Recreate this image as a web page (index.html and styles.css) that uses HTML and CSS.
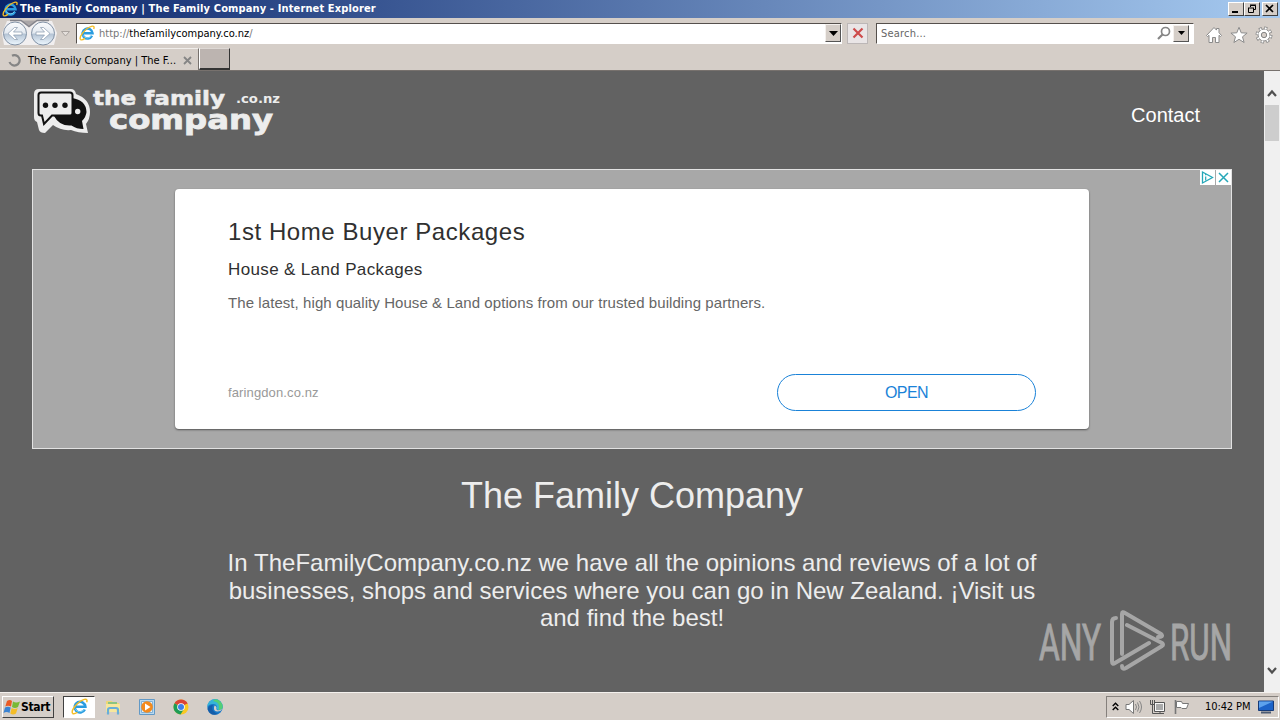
FILE: index.html
```html
<!DOCTYPE html>
<html lang="en">
<head>
    <meta charset="UTF-8">
    <title>The Family Company | The Family Company</title>
    <link rel="stylesheet" href="styles.css">
</head>
<body>
    <!-- shared icons -->
    <svg class="defs" width="0" height="0">
        <symbol id="ie" viewBox="0 0 16 16">
            <path d="M13 10.800a5 5 0 1 1 .5-2.600H4.500" fill="none" stroke="#2a9ce0" stroke-width="2.500"/>
            <path d="M12.600 10.400a4.800 4.800 0 0 1-8.600-.2" fill="none" stroke="#8cdcf8" stroke-width=".8"/>
            <path d="M1.600 14.600C-.6 12 6.500 3 12.500 1.300c2.500-.7 3 .8 2.200 2.700M1.600 14.600c1.200.8 3-.2 4.400-1.200" fill="none" stroke="#f4bd26" stroke-width="1.400"/>
        </symbol>
    </svg>

    <div class="titlebar">
        <svg class="title-icon" width="16" height="16"><use href="#ie"/></svg>
        <span class="title-text">The Family Company | The Family Company - Internet Explorer</span>
        <div class="win-buttons">
            <span class="win-btn"><svg width="14" height="12"><path d="M3 9h6" stroke="#000" stroke-width="2"/></svg></span>
            <span class="win-btn"><svg width="14" height="12"><path d="M5.500 4V2.500h5v4H9M5 2h6M3 5h6M3.500 5v4.500h5V5" fill="none" stroke="#000"/></svg></span>
            <span class="win-btn close"><svg width="14" height="12"><path d="M3 2l7 7M10 2l-7 7" stroke="#000" stroke-width="1.700"/></svg></span>
        </div>
    </div>

    <div class="navbar">
        <svg class="nav-arrows" width="76" height="30">
            <defs>
                <linearGradient id="btn" x1="0" y1="0" x2="0" y2="1">
                    <stop offset="0" stop-color="#fbfcfe"/>
                    <stop offset=".48" stop-color="#e3e9f0"/>
                    <stop offset=".52" stop-color="#b4c3d4"/>
                    <stop offset="1" stop-color="#eef8ff"/>
                </linearGradient>
            </defs>
            <path d="M7 3h45l5 12-3 12H4L2 15z" fill="#f1eff0"/>
            <path d="M10 2.500h11l8 6 8-6h12" fill="#aaa6a8" stroke="#85858c" stroke-width="1.500"/>
            <circle cx="15" cy="15.500" r="11.500" fill="url(#btn)" stroke="#8292a6"/>
            <circle cx="43" cy="15.500" r="11.500" fill="url(#btn)" stroke="#8292a6"/>
            <path d="M8 15.500l6.500-6h3l-4 4.500H22v3h-8.500l4 4.500h-3z" fill="#fff" stroke="#8798ae" stroke-width=".7"/>
            <path d="M50 15.500l-6.500-6h-3l4 4.500H36v3h8.500l-4 4.500h3z" fill="#fff" stroke="#8798ae" stroke-width=".7"/>
            <path d="M61.500 13.500h8l-4 4.500z" fill="#e4dfdb" stroke="#aaa4a0"/>
        </svg>
        <div class="address">
            <svg width="16" height="16"><use href="#ie"/></svg>
            <span class="url"><i>http://</i>thefamilycompany.co.nz<i>/</i></span>
            <span class="drop"><svg width="9" height="5"><path d="M0 0h9L4.500 5z"/></svg></span>
        </div>
        <div class="stop"><svg width="12" height="12"><path d="M1.500 1.500l9 9M10.500 1.500l-9 9" stroke="#cd4b4b" stroke-width="2.200"/></svg></div>
        <div class="search">
            <span>Search...</span>
            <svg width="14" height="14"><circle cx="8.500" cy="5.500" r="4" fill="#fff" stroke="#858585" stroke-width="1.700"/><path d="M5.500 8.500L1 13" stroke="#858585" stroke-width="2.200"/></svg>
            <span class="drop"><svg width="7" height="4"><path d="M0 0h7L3.500 4z"/></svg></span>
        </div>
        <div class="tools">
            <svg width="18" height="18"><path d="M1.500 9.500L9 1.500l2.500 2.600V2.500H14v4.200l2.500 2.800-1 1-1.500-1.200v7.200h-3.500v-5h-3v5H4V9.300l-1.500 1.200z" fill="#fff" stroke="#8b8b8b"/></svg>
            <svg width="18" height="18"><path d="M9 1.300l2.200 5.500 5.900.3-4.600 3.700 1.600 5.700L9 13.300l-5.100 3.200 1.600-5.700L.9 7.100l5.900-.3z" fill="#fff" stroke="#8b8b8b"/></svg>
            <svg width="18" height="18"><circle cx="9" cy="9" r="6.700" fill="none" stroke="#858585" stroke-width="3.500" stroke-dasharray="3 2.262"/><circle cx="9" cy="9" r="6" fill="#fff" stroke="#858585"/><circle cx="9" cy="9" r="6.700" fill="none" stroke="#fff" stroke-width="2" stroke-dasharray="1.800 3.462" stroke-dashoffset="-.6"/><circle cx="9" cy="9" r="2.700" fill="#d5cec8" stroke="#858585"/></svg>
        </div>
    </div>

    <div class="tabs">
        <div class="tab">
            <svg width="13" height="13"><path d="M4 1.700A5.200 5.200 0 1 1 1.500 8" fill="none" stroke="#858585" stroke-width="2.200"/></svg>
            <span>The Family Company | The F...</span>
            <svg class="tab-x" width="9" height="9"><path d="M1 1l7 7M8 1L1 8" stroke="#858585" stroke-width="1.800"/></svg>
        </div>
        <div class="new-tab"></div>
    </div>

    <div class="viewport">
        <main class="page">
            <header>
                <svg class="logo" width="250" height="52" fill="#ededed">
                    <path d="M6 1h32q4 0 5 5q14 5 14 18q0 7-4 12l2 9q-10 0-17-3q-10 1-18-5l-8 8q-5 0-6-3l-2-8q-3-1-3-5V6q0-5 5-5z"/>
                    <path d="M39 10q14 2 14.500 14q-.5 5-4.500 9l1.500 8q-7 0-12-3.500q-12 1-17.500-9.500h15q3 0 3-3z" fill="#111"/>
                    <path d="M8 4.500h29q2.500 0 2.500 2.500v18q0 2.500-2.500 2.500H19l-8 8.500-2-8.500H8q-2.500 0-2.500-2.500V7q0-2.500 2.500-2.500z" stroke="#111" stroke-width="2"/>
                    <circle cx="12.500" cy="17.300" r="2.700" fill="#111"/>
                    <circle cx="22" cy="17.300" r="2.700" fill="#111"/>
                    <circle cx="32" cy="17.300" r="2.700" fill="#111"/>
                    <circle cx="44.700" cy="23.500" r="2.700"/>
                    <text class="logo-text medium" x="60" y="17" font-size="19" textLength="132" lengthAdjust="spacingAndGlyphs">the family</text>
                    <text class="logo-text" x="203" y="15" font-size="13" textLength="44" lengthAdjust="spacingAndGlyphs">.co.nz</text>
                    <text class="logo-text heavy" x="76" y="41" font-size="27" textLength="164" lengthAdjust="spacingAndGlyphs">company</text>
                </svg>
                <a class="contact">Contact</a>
            </header>

            <div class="ad">
                <div class="ad-choices">
                    <span><svg width="15" height="15"><path d="M2.500 2v11L12.500 7.500z" fill="none" stroke="#25a7b8" stroke-width="1.300"/><path d="M5.700 6.500v4M5.700 4v1.300" stroke="#25a7b8" stroke-width="1.200"/></svg></span>
                    <span><svg width="15" height="15"><path d="M3 3l9 9M12 3l-9 9" stroke="#25a7b8" stroke-width="1.500"/></svg></span>
                </div>
                <div class="ad-card">
                    <div class="ad-title">1st Home Buyer Packages</div>
                    <div class="ad-subtitle">House &amp; Land Packages</div>
                    <div class="ad-text">The latest, high quality House &amp; Land options from our trusted building partners.</div>
                    <div class="ad-footer">
                        <span class="ad-domain">faringdon.co.nz</span>
                        <a class="ad-open">OPEN</a>
                    </div>
                </div>
            </div>

            <h1>The Family Company</h1>
            <p class="intro"><span>In TheFamilyCompany.co.nz we have all the opinions and reviews of a lot of</span><br>businesses, shops and services where you can go in New Zealand. ¡Visit us<br>and find the best!</p>

            <svg class="watermark" width="204" height="66">
                <text x="4" y="50" textLength="62" lengthAdjust="spacingAndGlyphs">ANY</text>
                <path d="M81 8q-4 0-4 4v39q0 4 3 2l34-20M87 44V4q0-3 3-1l36 21q3 3-3 3M92 15l35 18q2 2 0 3L91 58q-4 2-4-2"/>
                <text x="135" y="50" textLength="62" lengthAdjust="spacingAndGlyphs">RUN</text>
            </svg>
        </main>
        <div class="scrollbar">
            <svg width="10" height="8"><path d="M1 7l4-4.500L9 7" fill="none" stroke="#505050" stroke-width="2.200"/></svg>
            <div class="thumb"></div>
            <svg class="down" width="10" height="8"><path d="M1 1l4 4.500L9 1" fill="none" stroke="#505050" stroke-width="2.200"/></svg>
        </div>
    </div>

    <div class="taskbar">
        <div class="start">
            <svg width="18" height="16"><path d="M4 2q3-2 5 0L8 7.500Q5 6 2.300 7.500z" fill="#ea5a24"/><path d="M10 2.500q3 2 7 0l-2 5.500q-3 2-6 0z" fill="#78b936"/><path d="M2 8.500q3-1.500 5.700 0l-1.200 5.500q-3-2-6 0z" fill="#3b83d2"/><path d="M8.700 9q3 2 6 0L13 14.500q-3 2-5.700 0z" fill="#f5bd27"/></svg>
            <span>Start</span>
        </div>
        <div class="task active"><svg width="17" height="17"><use href="#ie"/></svg></div>
        <div class="task"><svg width="16" height="16"><path d="M1 2h6l1 2h6v9H1z" fill="#eed777"/><path d="M3 3h9v3H3z" fill="#8cc480"/><path d="M1 5h14v8H1z" fill="#f7e79c"/><path d="M3 15.500V11q0-2 2-2h6q2 0 2 2v4.500" fill="none" stroke="#69afd8" stroke-width="2.200"/></svg></div>
        <div class="task"><svg width="16" height="16"><path d="M.5.500h15v15H.5z" fill="#b8d9f0" stroke="#6299c6"/><path d="M2.500 2.500h11v11h-11z" fill="#e6f2fa" stroke="#82b0d4"/><circle cx="8" cy="8" r="5.800" fill="#f38a1d"/><path d="M6 4.500v7L11.500 8z" fill="#fff"/></svg></div>
        <div class="task"><svg width="16" height="16"><circle cx="8" cy="8" r="7.500" fill="#f9c923"/><path d="M8 8L1.500 4.200A7.500 7.500 0 0 1 14.500 4.200z" fill="#db4437"/><path d="M1.500 4.200A7.500 7.500 0 0 0 7.500 15.500L11 10z" fill="#1e9c56"/><path d="M8 4.500h6.700L13 3z" fill="#db4437"/><circle cx="8" cy="8" r="3.800" fill="#fff"/><circle cx="8" cy="8" r="3" fill="#3f7fe8"/></svg></div>
        <div class="task"><svg width="16" height="16"><circle cx="8" cy="8" r="7.700" fill="#1678c8"/><path d="M.3 8a7.700 7.700 0 0 1 15.400-.5q0 3.500-4 3.500-3 0-2-2.500Q10 5 6 5T.3 8z" fill="#36b4d8"/><path d="M8 .3a7.700 7.700 0 0 1 7.700 7.200q0 3.500-4 3.500 2-8-5.700-9z" fill="#54cf76"/><path d="M9.500 8.500q-1 3 2.700 2.800l3.300-1.300q-2 2.500-5 2.500-4 0-3.500-4T9.500 8.500z" fill="#d5cec8"/><path d="M6 6q-3 6 5 9-8 3-10.500-5Q2 6 6 6z" fill="#155da9"/></svg></div>
        <div class="tray">
            <svg width="7" height="9"><path d="M.7 4l2.800-2.700L6.300 4M.7 8l2.800-2.700L6.300 8" fill="none" stroke="#000" stroke-width="1.400"/></svg>
            <svg width="18" height="16"><path d="M1 5.500h3L8.500 1.500v13L4 10.500H1z" fill="#fff" stroke="#777"/><path d="M10.500 5q2 3 0 6M12.500 3.500q3 4.500 0 9M14.500 2q4 6 0 12" fill="none" stroke="#858585"/></svg>
            <svg width="18" height="16"><path d="M5.500 3.500h10v9h-10zM8 14.500h7M11 12.500v2" fill="#f8f8f8" stroke="#555"/><path d="M7 5h7v6H7z" fill="#aaa"/><path d="M1.500 1v4.500h4V1M3.500 1v13.500H8" fill="none" stroke="#555"/></svg>
            <svg width="18" height="16"><path d="M2.500 1v14" stroke="#777" stroke-width="1.600"/><path d="M3.500 2.500h5l1 2h6l-2 5H9l-1-1H3.500z" fill="#fff" stroke="#777"/></svg>
            <span class="clock">10:42 PM</span>
            <svg width="16" height="14"><path d="M.5 1h15v9.500H.5z" fill="#1d63c8" stroke="#163b78"/><path d="M1 1.500h14L1 8z" fill="#5da2ed"/><path d="M3 12.500h10" stroke="#4c5b72" stroke-width="2"/></svg>
        </div>
    </div>
</body>
</html>
```

FILE: styles.css
```css
* {
    box-sizing: border-box;
}
body {
    margin: 0;
    width: 1280px;
    height: 720px;
    overflow: hidden;
    display: flex;
    flex-direction: column;
    background-color: #d5cec8;
    font-family: "DejaVu Sans Condensed", "DejaVu Sans", sans-serif;
    font-size: 11px;
    color: #000;
}
svg {
    display: block;
    flex: none;
}
.defs {
    position: absolute;
}
.titlebar {
    height: 18px;
    flex: none;
    display: flex;
    align-items: center;
    padding: 0 2px;
    background: linear-gradient(to right, #0a246a, #a6caf0);
    color: #fff;
}
.title-text {
    margin-left: 2px;
    padding-bottom: 1px;
    font-weight: bold;
    white-space: nowrap;
    letter-spacing: 0.13px;
}
.win-buttons {
    display: flex;
    margin-left: auto;
}
.win-btn {
    width: 16px;
    height: 14px;
    background-color: #d5cec8;
    border: 1px solid;
    border-color: #fff #404040 #404040 #fff;
}
.win-btn.close {
    margin-left: 2px;
}
.navbar {
    height: 30px;
    flex: none;
    display: flex;
    align-items: center;
}
.address, .search {
    height: 21px;
    display: flex;
    align-items: center;
    background-color: #fff;
    border: 1px solid;
    border-color: #55504c #fff #fff #55504c;
}
.address {
    width: 766px;
    padding-left: 2px;
}
.url {
    margin-left: 4px;
}
.url i {
    font-style: normal;
    color: #777;
}
.drop {
    width: 16px;
    height: 18px;
    margin-left: auto;
    display: flex;
    align-items: center;
    justify-content: center;
    background-color: #d5cec8;
    border: 1px solid;
    border-color: #f4f0ed #555 #555 #f4f0ed;
}
.stop {
    width: 21px;
    height: 21px;
    margin: 0 8px 0 5px;
    display: flex;
    align-items: center;
    justify-content: center;
    background-color: #e9e5e6;
    border: 1px solid #bcb7b7;
}
.search {
    width: 318px;
    padding: 0 4px;
    color: #666;
    letter-spacing: 0.2px;
}
.search > svg {
    margin-left: auto;
}
.search .drop {
    margin-left: 2px;
    height: 17px;
}
.tools {
    display: flex;
    gap: 7px;
    margin: 3px 0 0 11px;
}
.tabs {
    height: 23px;
    flex: none;
    display: flex;
    border-bottom: 1px solid #77716d;
}
.tab {
    width: 199px;
    display: flex;
    align-items: center;
    padding: 2px 6px 0 8px;
    border-top: 1px solid #f1eeeb;
    border-right: 1px solid #77716d;
}
.tab span {
    margin-left: 7px;
    white-space: nowrap;
}
.tab-x {
    margin-left: auto;
}
.new-tab {
    width: 31px;
    height: 22px;
    background-color: #bcb4b0;
    border: 1px solid;
    border-color: #ddd8d4 #333 #333 #fff;
    border-bottom-width: 2px;
}
.viewport {
    height: 621px;
    flex: none;
    display: flex;
}
.page {
    position: relative;
    width: 1264px;
    padding: 0 32px;
    background-color: #626262;
    font-family: "Liberation Sans", Arial, sans-serif;
    color: #ededed;
}
header {
    height: 98px;
    display: flex;
    justify-content: space-between;
    padding: 17px 32px 0 1px;
}
.logo-text {
    font-family: "DejaVu Sans", sans-serif;
    font-weight: bold;
}
.medium {
    stroke: #ededed;
    stroke-width: 0.5px;
}
.heavy {
    stroke: #ededed;
    stroke-width: 0.8px;
}
.contact {
    margin-top: 15px;
    font-size: 20px;
    line-height: 24px;
    color: #fff;
}
.ad {
    position: relative;
    height: 280px;
    padding-top: 19px;
    border: 1px solid #e2e2e2;
    background-color: #a8a8a8;
}
.ad-choices {
    position: absolute;
    top: 0;
    right: 0;
    display: flex;
    gap: 1px;
}
.ad-choices span {
    background-color: #fff;
}
.ad-card {
    width: 914px;
    height: 240px;
    margin: 0 auto;
    padding: 28px 53px 0;
    display: flex;
    flex-direction: column;
    border-radius: 4px;
    background-color: #fff;
    box-shadow: 0 1px 2px #555;
}
.ad-title {
    font-size: 24px;
    line-height: 30px;
    letter-spacing: 0.57px;
    color: #303030;
}
.ad-subtitle {
    margin-top: 13px;
    font-size: 17px;
    line-height: 20px;
    letter-spacing: 0.36px;
    color: #303030;
}
.ad-text {
    margin-top: 13px;
    font-size: 15px;
    line-height: 20px;
    letter-spacing: 0.075px;
    color: #666;
}
.ad-footer {
    margin-top: 61px;
    display: flex;
    align-items: center;
    justify-content: space-between;
}
.ad-domain {
    font-size: 13px;
    letter-spacing: 0.12px;
    color: #999;
}
.ad-open {
    width: 259px;
    height: 37px;
    border: 1px solid #1a82d8;
    border-radius: 19px;
    font-size: 16px;
    line-height: 36px;
    letter-spacing: -0.6px;
    text-align: center;
    color: #1a82d8;
}
h1 {
    margin: 26px 0 0;
    font-size: 36px;
    font-weight: normal;
    line-height: 42px;
    text-align: center;
}
.intro {
    margin: 32px 0 0;
    font-size: 24px;
    line-height: 27.5px;
    text-align: center;
    white-space: nowrap;
}
.intro span {
    letter-spacing: 0.035px;
}
/* sits over the page, bottom right */
.watermark {
    position: absolute;
    right: 25px;
    bottom: 16px;
    fill: #a6a6a6;
    stroke: #a6a6a6;
}
.watermark text {
    font-family: Roboto, sans-serif;
    font-size: 50px;
    stroke-width: 1px;
}
.watermark path {
    fill: none;
    stroke-width: 4px;
    stroke-linejoin: round;
    stroke-linecap: round;
}
.scrollbar {
    width: 16px;
    display: flex;
    flex-direction: column;
    align-items: center;
    padding: 18px 0 17px;
    background-color: #f0f0f0;
}
.thumb {
    width: 14px;
    height: 36px;
    margin-top: 8px;
    background-color: #cdcdcd;
}
.scrollbar .down {
    margin-top: auto;
}
.taskbar {
    height: 28px;
    flex: none;
    display: flex;
    align-items: center;
    padding: 0 1px 0 2px;
    border-top: 1px solid #f4f1ee;
}
.start {
    width: 52px;
    height: 22px;
    display: flex;
    align-items: center;
    border: 1px solid;
    border-color: #fff #404040 #404040 #fff;
    font-size: 12px;
    font-weight: bold;
}
.start span {
    letter-spacing: -0.3px;
}
.task {
    width: 32px;
    height: 22px;
    margin-right: 2px;
    display: flex;
    align-items: center;
    justify-content: center;
}
.task.active {
    margin-left: 9px;
    background-color: #fff;
    border: 1px solid;
    border-color: #404040 #fff #fff #404040;
}
.tray {
    width: 173px;
    height: 22px;
    margin-left: auto;
    display: flex;
    align-items: center;
    gap: 6px;
    padding-left: 5px;
    border: 1px solid;
    border-color: #85807c #fff #fff #85807c;
}
.clock {
    margin: 0 2px 0 8px;
    white-space: nowrap;
    letter-spacing: -0.1px;
}
```
